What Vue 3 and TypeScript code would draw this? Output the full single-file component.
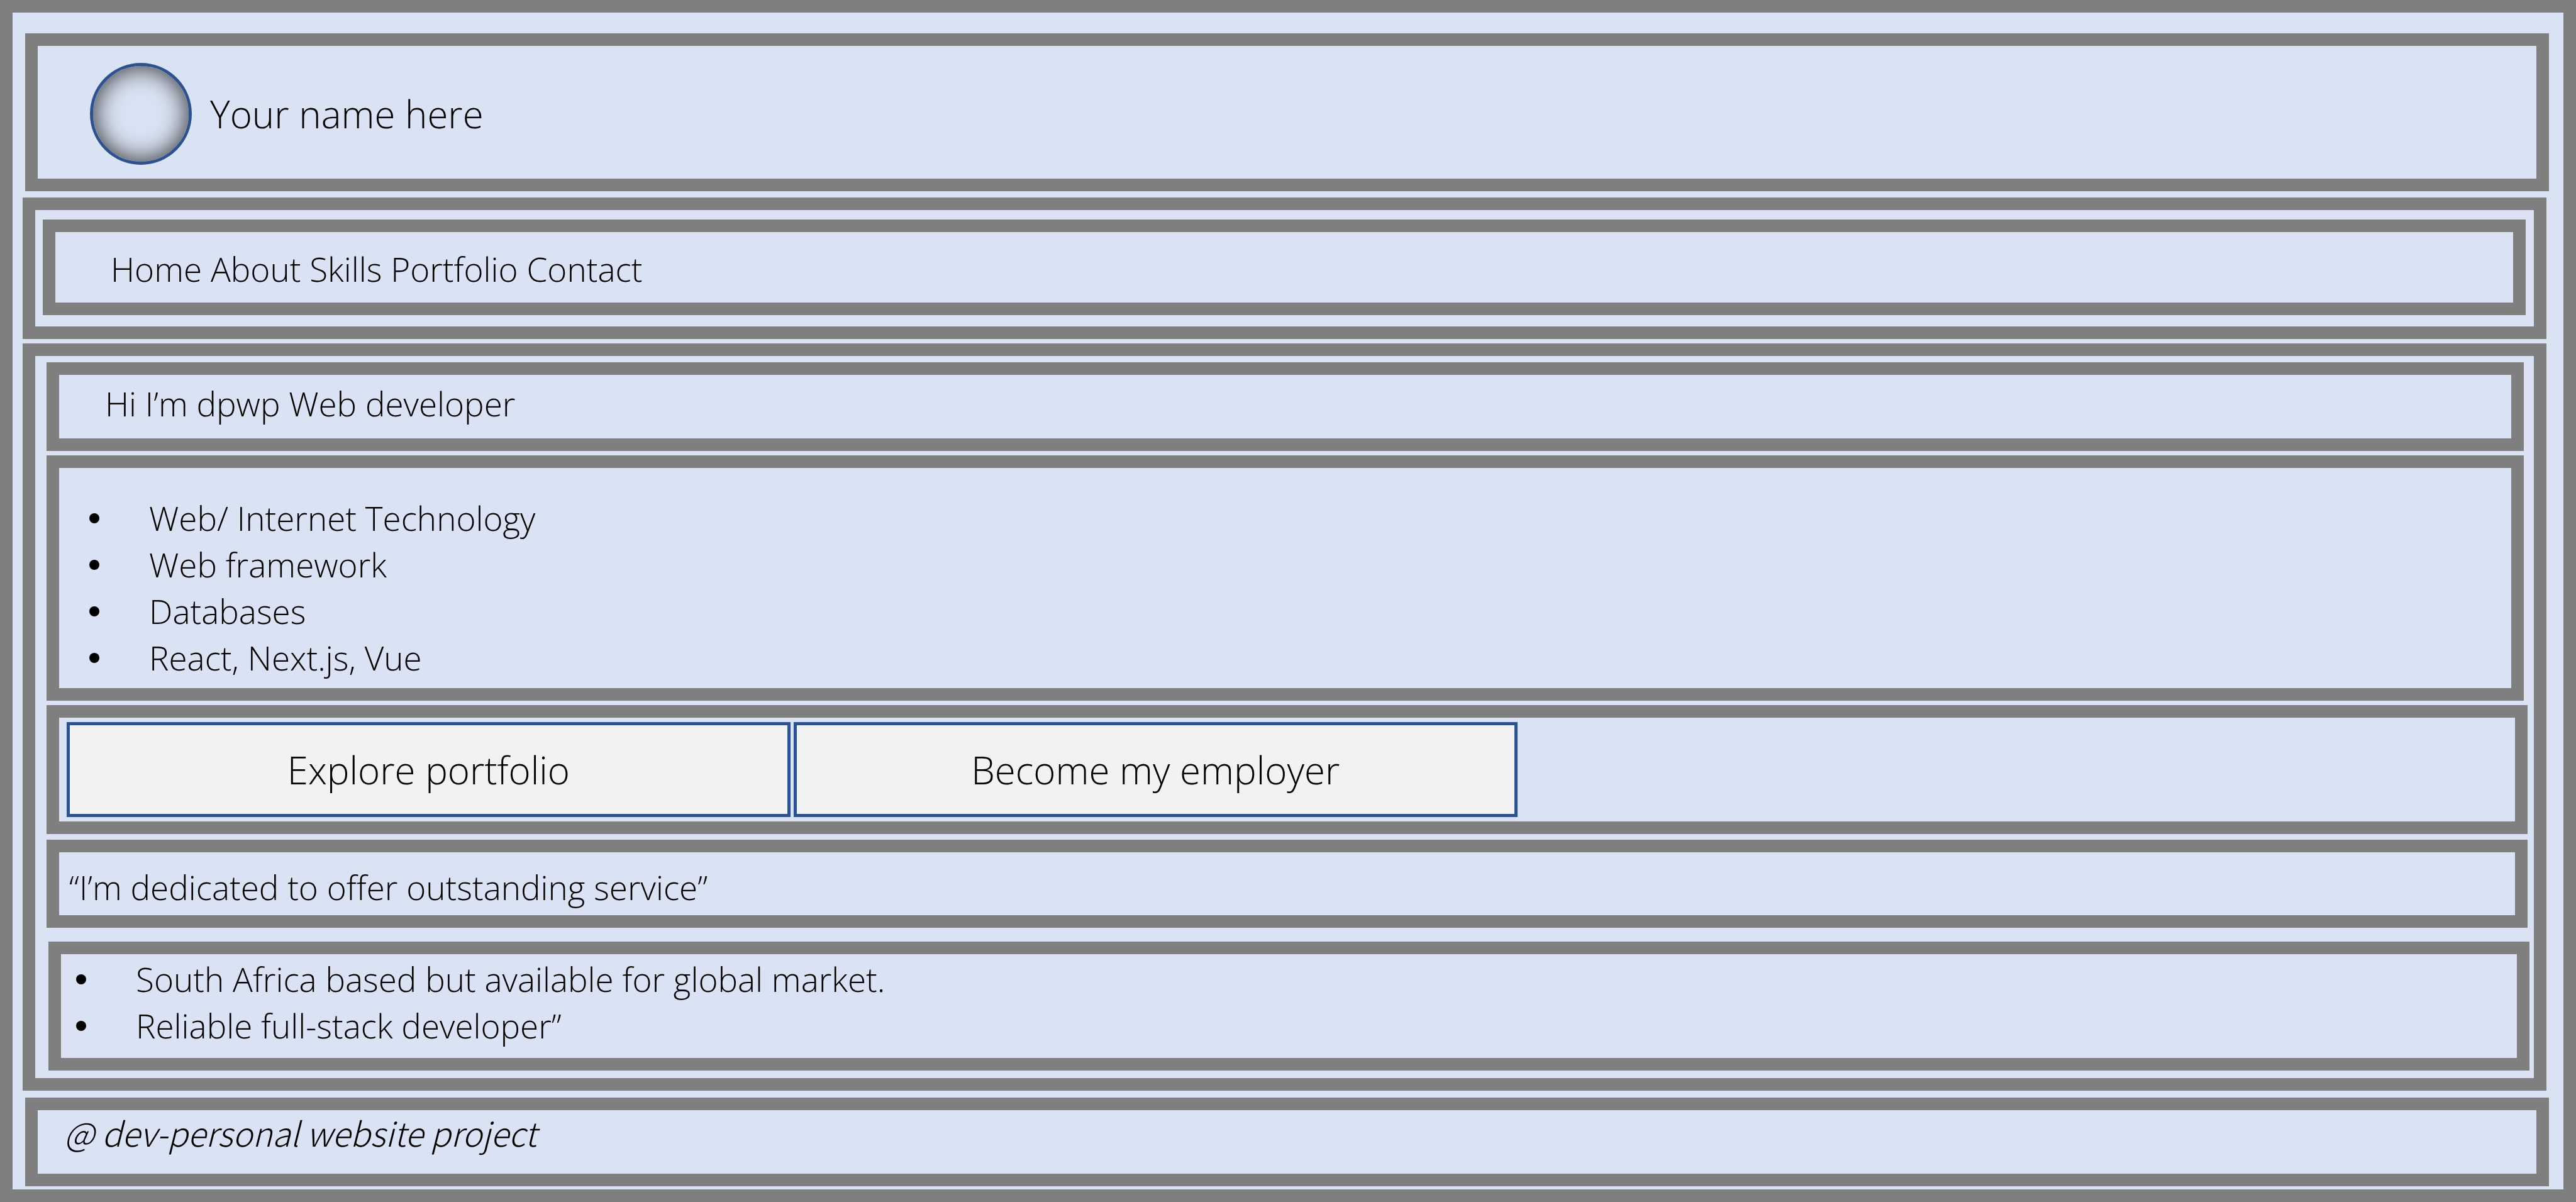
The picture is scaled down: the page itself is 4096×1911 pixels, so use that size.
<script setup lang="ts">
interface NavLink {
  label: string
  href: string
}

const links: NavLink[] = [
  { label: 'Home', href: '#home' },
  { label: 'About', href: '#about' },
  { label: 'Skills', href: '#skills' },
  { label: 'Portfolio', href: '#portfolio' },
  { label: 'Contact', href: '#contact' },
]

const skills: string[] = [
  'Web/ Internet Technology',
  'Web framework',
  'Databases',
  'React, Next.js, Vue',
]

const highlights: string[] = [
  'South Africa based but available for global market.',
  'Reliable full-stack developer”',
]
</script>

<template>
  <div class="page">
    <header class="panel banner">
      <span class="avatar" aria-hidden="true"></span>
      <span class="name">Your name here</span>
    </header>

    <div class="panel nav-frame">
      <nav class="panel nav" aria-label="Main">
        <template v-for="link in links" :key="link.href"><a :href="link.href">{{ link.label }}</a>{{ ' ' }}</template>
      </nav>
    </div>

    <main id="home" class="panel content">
      <h1 id="about" class="panel intro">Hi I’m dpwp Web developer</h1>

      <ul id="skills" class="panel bullets skills">
        <li v-for="skill in skills" :key="skill">{{ skill }}</li>
      </ul>

      <div id="portfolio" class="panel actions">
        <button type="button">Explore portfolio</button>
        <button type="button">Become my employer</button>
      </div>

      <p class="panel quote">“I’m dedicated to offer outstanding service”</p>

      <ul class="panel bullets highlights">
        <li v-for="item in highlights" :key="item">{{ item }}</li>
      </ul>
    </main>

    <footer id="contact" class="panel footer">@ dev-personal website project</footer>
  </div>
</template>

<style>
body {
  background: #dae3f3;
}
</style>

<style scoped>
.page {
  box-sizing: border-box;
  display: flex;
  flex-direction: column;
  padding: 33px 0 5px;
  border: 20px solid #7f7f7f;
  background: #dae3f3;
  color: #000;
  font-family: 'Open Sans', 'Noto Sans', sans-serif;
  font-size: 53px;
  font-weight: 300;
  line-height: 74px;
}

.panel {
  box-sizing: border-box;
  margin: 0;
  border: 20px solid #7f7f7f;
}

.banner {
  display: flex;
  align-items: center;
  gap: 29px;
  margin: 0 23px 10px 20px;
  padding: 27px 83px 22px;
}

.avatar {
  box-sizing: border-box;
  flex: none;
  width: 162px;
  height: 162px;
  border: 5px solid #2f528f;
  border-radius: 50%;
  box-shadow: inset 0 0 38px 2px rgba(0, 0, 0, 0.75);
}

.name {
  font-size: 60px;
}

.nav-frame {
  margin: 0 27px 7px 16px;
  padding: 15px 13px 18px 12px;
}

.nav {
  padding: 22px 88px 16px;
}

.nav a {
  color: inherit;
  text-decoration: none;
}

.content {
  display: flex;
  flex-direction: column;
  margin: 0 27px 11px 16px;
  padding: 10px 0 12px;
}

.intro {
  margin: 0 16px 7px 18px;
  padding: 9px 73px 18px;
  font-size: inherit;
  font-weight: inherit;
}

.bullets {
  list-style: none;
}

.bullets li {
  display: flex;
  align-items: center;
}

.bullets li::before {
  content: '';
  flex: none;
  width: 16px;
  height: 16px;
  margin-right: 79px;
  border-radius: 50%;
  background: #000;
}

.skills {
  margin: 0 16px 7px 18px;
  padding: 43px 48px 11px;
}

.actions {
  display: grid;
  grid-template-columns: 11fr 11fr 15fr;
  column-gap: 5px;
  margin: 0 10px 9px 18px;
  padding: 7px 12px;
}

.actions button {
  height: 151px;
  padding: 0;
  border: 5px solid #2f528f;
  border-radius: 0;
  background: #f2f2f2;
  color: inherit;
  font: inherit;
  font-size: 60px;
}

.quote {
  margin: 0 10px 22px 18px;
  padding: 19px 16px 7px;
}

.highlights {
  margin: 0 7px 0 21px;
  padding: 3px 24px 14px;
}

/* The CJK face has no italic, so the browser slants the upright light letters. */
.footer {
  margin: 0 23px 0 20px;
  padding: 0 42px 31px;
  font-family: 'Noto Sans CJK JP', 'Open Sans', sans-serif;
  font-style: italic;
  line-height: 70px;
}
</style>
